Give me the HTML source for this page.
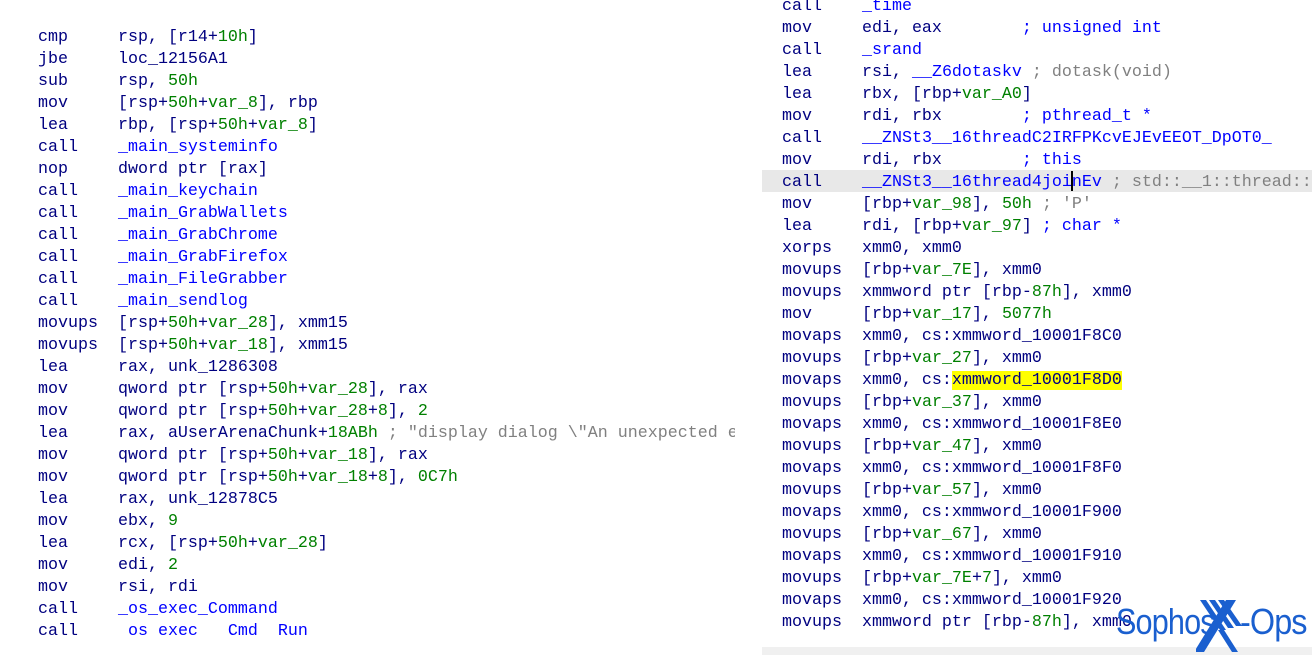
<!DOCTYPE html>
<html><head><meta charset="utf-8"><style>
html,body{margin:0;padding:0;background:#fff;width:1312px;height:655px;overflow:hidden;position:relative}
pre{margin:0;font-family:"Liberation Mono",monospace;font-size:16.67px;line-height:22px;color:#000080;position:absolute;white-space:pre}
.b{color:#0000ff}.g{color:#008000}.c{color:#808080}
#L{left:38px;top:-17px;width:697px;overflow:hidden}
#R{left:782px;top:-4px}
.hl{position:absolute;left:762px;top:170px;width:550px;height:22px;background:#e8e8e8}
.bot{position:absolute;left:762px;top:647px;width:550px;height:8px;background:#f0f0f0}
.y{background:#ffff00}
.cur{position:absolute;left:1071px;top:171px;width:2px;height:20px;background:#000}
.lt{position:absolute;font-family:"Liberation Sans",sans-serif;font-size:36px;color:#1a5fcf;line-height:40px;white-space:nowrap;transform-origin:0 0;letter-spacing:-1px}
</style></head><body>
<div class="hl"></div><div class="bot"></div>
<pre id="L"><span style="visibility:hidden">x</span>

cmp     rsp, [r14+<span class="g">10h</span>]
jbe     loc_12156A1
sub     rsp, <span class="g">50h</span>
mov     [rsp+<span class="g">50h</span>+<span class="g">var_8</span>], rbp
lea     rbp, [rsp+<span class="g">50h</span>+<span class="g">var_8</span>]
call    <span class="b">_main_systeminfo</span>
nop     dword ptr [rax]
call    <span class="b">_main_keychain</span>
call    <span class="b">_main_GrabWallets</span>
call    <span class="b">_main_GrabChrome</span>
call    <span class="b">_main_GrabFirefox</span>
call    <span class="b">_main_FileGrabber</span>
call    <span class="b">_main_sendlog</span>
movups  [rsp+<span class="g">50h</span>+<span class="g">var_28</span>], xmm15
movups  [rsp+<span class="g">50h</span>+<span class="g">var_18</span>], xmm15
lea     rax, unk_1286308
mov     qword ptr [rsp+<span class="g">50h</span>+<span class="g">var_28</span>], rax
mov     qword ptr [rsp+<span class="g">50h</span>+<span class="g">var_28</span>+<span class="g">8</span>], <span class="g">2</span>
lea     rax, aUserArenaChunk+<span class="g">18ABh</span> <span class="c">; "display dialog \"An unexpected error"</span>
mov     qword ptr [rsp+<span class="g">50h</span>+<span class="g">var_18</span>], rax
mov     qword ptr [rsp+<span class="g">50h</span>+<span class="g">var_18</span>+<span class="g">8</span>], <span class="g">0C7h</span>
lea     rax, unk_12878C5
mov     ebx, <span class="g">9</span>
lea     rcx, [rsp+<span class="g">50h</span>+<span class="g">var_28</span>]
mov     edi, <span class="g">2</span>
mov     rsi, rdi
call    <span class="b">_os_exec_Command</span>
call    <span class="b"> os exec   Cmd  Run</span></pre>
<pre id="R">call    <span class="b">_time</span>
mov     edi, eax        <span class="b">; unsigned int</span>
call    <span class="b">_srand</span>
lea     rsi, <span class="b">__Z6dotaskv</span> <span class="c">; dotask(void)</span>
lea     rbx, [rbp+<span class="g">var_A0</span>]
mov     rdi, rbx        <span class="b">; pthread_t *</span>
call    <span class="b">__ZNSt3__16threadC2IRFPKcvEJEvEEOT_DpOT0_</span>
mov     rdi, rbx        <span class="b">; this</span>
call    <span class="b">__ZNSt3__16thread4joinEv</span> <span class="c">; std::__1::thread::join</span>
mov     [rbp+<span class="g">var_98</span>], <span class="g">50h</span> <span class="c">; 'P'</span>
lea     rdi, [rbp+<span class="g">var_97</span>] <span class="b">; char *</span>
xorps   xmm0, xmm0
movups  [rbp+<span class="g">var_7E</span>], xmm0
movups  xmmword ptr [rbp-<span class="g">87h</span>], xmm0
mov     [rbp+<span class="g">var_17</span>], <span class="g">5077h</span>
movaps  xmm0, cs:xmmword_10001F8C0
movups  [rbp+<span class="g">var_27</span>], xmm0
movaps  xmm0, cs:<span class="y">xmmword_10001F8D0</span>
movups  [rbp+<span class="g">var_37</span>], xmm0
movaps  xmm0, cs:xmmword_10001F8E0
movups  [rbp+<span class="g">var_47</span>], xmm0
movaps  xmm0, cs:xmmword_10001F8F0
movups  [rbp+<span class="g">var_57</span>], xmm0
movaps  xmm0, cs:xmmword_10001F900
movups  [rbp+<span class="g">var_67</span>], xmm0
movaps  xmm0, cs:xmmword_10001F910
movups  [rbp+<span class="g">var_7E</span>+<span class="g">7</span>], xmm0
movaps  xmm0, cs:xmmword_10001F920
movups  xmmword ptr [rbp-<span class="g">87h</span>], xmm0</pre>
<div class="cur"></div>
<div class="lt" style="left:1116px;top:602px;transform:scaleX(0.85)">Sophos</div>
<svg style="position:absolute;left:1196px;top:600px" width="46" height="52" viewBox="0 0 46 52">
<g fill="#1a5fcf">
<polygon points="4,0 10,0 30,30 24,30"/>
<polygon points="13,0 19,0 38,28 32,28"/>
<polygon points="22,0 28,0 46,26 40,26"/>
<polygon points="30,0 40,0 8,52 -2,52"/>
<polygon points="22,30 28,30 42,52 36,52"/>
</g></svg>
<div class="lt" style="left:1240px;top:602px;transform:scaleX(0.9)">-Ops</div>
</body></html>
